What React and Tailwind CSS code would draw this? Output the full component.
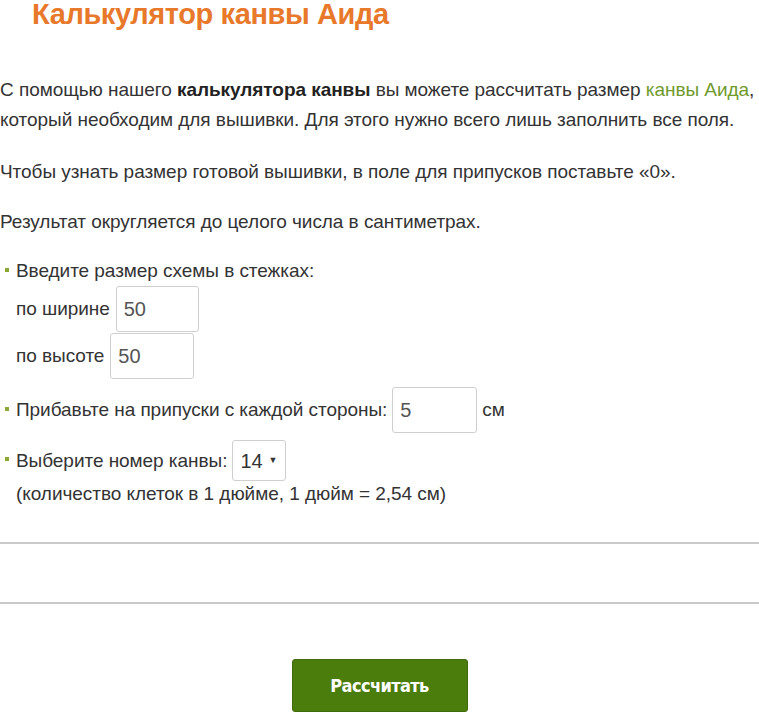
import React, { useState } from 'react';

const Bullet = () => (
    <span className="inline-block w-[4px] h-[4px] bg-[#8aa832] mr-[7px] mb-[3px] ml-[5px] align-middle" />
);

const Field = ({ value, className }) => (
    <input
        type="text"
        defaultValue={value}
        className={`h-[46px] border border-[#cfcfcf] rounded-[3px] px-[7px] text-[20px] text-[#555] outline-none ${className}`}
    />
);

const App = () => {
    const [canvas, setCanvas] = useState('14');

    return (
        <div className="w-[759px] h-[714px] overflow-hidden bg-white font-['Liberation_Sans',Arial,sans-serif] text-[#333] text-[19px] leading-[30px]">
            {/* Title */}
            <h1 className="pl-[32px] text-[29px] leading-[28px] font-bold text-[#e8782a] tracking-[-0.4px]">
                Калькулятор канвы Аида
            </h1>

            {/* Intro */}
            <div className="mt-[47px] tracking-[-0.05px]">
                <p className="whitespace-nowrap">
                    С помощью нашего <b className="text-[#222]">калькулятора канвы</b> вы можете рассчитать размер{' '}
                    <a className="text-[#6f9a2c]">канвы Аида</a>,
                </p>
                <p>который необходим для вышивки. Для этого нужно всего лишь заполнить все поля.</p>
                <p className="mt-[22px]">Чтобы узнать размер готовой вышивки, в поле для припусков поставьте «0».</p>
                <p className="mt-[20px]">Результат округляется до целого числа в сантиметрах.</p>
            </div>

            {/* Form */}
            <div className="mt-[21px] tracking-[-0.05px]">
                <div className="flex items-center h-[26px]">
                    <Bullet />
                    <span>Введите размер схемы в стежках:</span>
                </div>
                <div className="flex items-center gap-[6px] pl-[16px] mt-[2px]">
                    <span>по ширине</span>
                    <Field value="50" className="w-[83px]" />
                </div>
                <div className="flex items-center gap-[6px] pl-[16px] mt-[1px]">
                    <span>по высоте</span>
                    <Field value="50" className="w-[84px]" />
                </div>
                <div className="flex items-center mt-[8px]">
                    <Bullet />
                    <span>Прибавьте на припуски с каждой стороны:</span>
                    <Field value="5" className="w-[85px] ml-[5px]" />
                    <span className="ml-[5px]">см</span>
                </div>
                <div className="flex items-center mt-[7px]">
                    <Bullet />
                    <span>Выберите номер канвы:</span>
                    <div className="relative ml-[5px] h-[41px] w-[54px] border border-[#cfcfcf] rounded-[3px] flex items-center">
                        <select
                            value={canvas}
                            onChange={(e) => setCanvas(e.target.value)}
                            className="appearance-none w-full h-full pl-[7px] text-[20px] text-[#333] bg-transparent outline-none"
                        >
                            <option value="11">11</option>
                            <option value="14">14</option>
                            <option value="16">16</option>
                            <option value="18">18</option>
                        </select>
                        <span className="absolute right-[8px] top-[15px] text-[9px] leading-[9px] pointer-events-none">▼</span>
                    </div>
                </div>
                <p className="pl-[16px] mt-[-2px]">(количество клеток в 1 дюйме, 1 дюйм = 2,54 см)</p>
            </div>

            {/* Result area */}
            <div className="mt-[33px] border-t-2 border-[#c9c9c9] h-[60px]" />
            <div className="border-t-2 border-[#c9c9c9]" />

            <div className="flex justify-center mt-[55px]">
                <button className="w-[176px] h-[53px] rounded-[3px] bg-[#4a7d0c] border border-[#3f6b0a] text-white text-[18px] font-bold tracking-[-0.6px] font-['DejaVu_Sans_Condensed','DejaVu_Sans',sans-serif]">
                    Рассчитать
                </button>
            </div>
        </div>
    );
};

export default App;
